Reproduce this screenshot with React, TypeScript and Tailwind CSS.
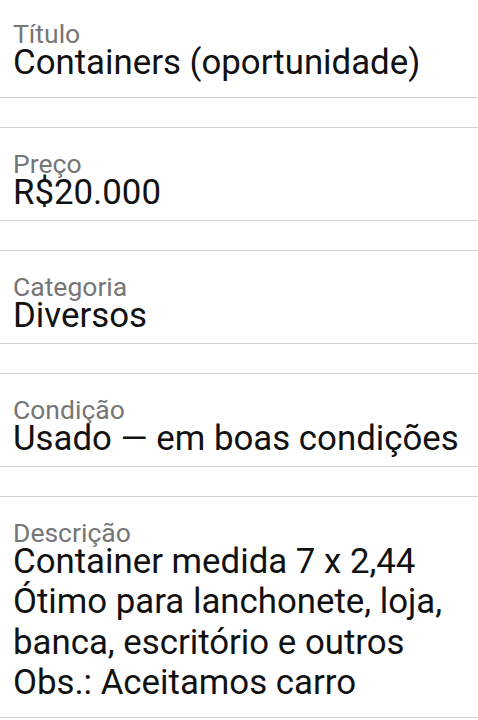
const fields = [
  { label: "Título", value: ["Containers (oportunidade)"] },
  { label: "Preço", value: ["R$20.000"] },
  { label: "Categoria", value: ["Diversos"] },
  { label: "Condição", value: ["Usado — em boas condições"] },
  {
    label: "Descrição",
    value: [
      "Container medida 7 x 2,44",
      "Ótimo para lanchonete, loja,",
      "banca, escritório e outros",
      "Obs.: Aceitamos carro",
    ],
  },
];

const Field = ({
  label,
  value,
  first,
  last,
}: {
  label: string;
  value: string[];
  first: boolean;
  last: boolean;
}) => {
  const padding = first
    ? "pt-[24.5px] pb-[15px]"
    : last
    ? "pt-[26.5px] pb-[14.5px] border-t border-[#d2d2d2]"
    : "pt-[26.5px] pb-[8px] border-t border-[#d2d2d2]";

  return (
    <div className={`px-[13px] border-b border-[#d2d2d2] ${padding}`}>
      <p className="text-[26.5px] leading-[17px] text-[#767676]">{label}</p>
      <div className="text-[34.8px] leading-[40.5px] text-[#111111]">
        {value.map((line) => (
          <p key={line} className="whitespace-nowrap">
            {line}
          </p>
        ))}
      </div>
    </div>
  );
};

export default function App() {
  return (
    <div
      className="w-[478px] h-[720px] overflow-hidden bg-white flex flex-col gap-[29px]"
      style={{ fontFamily: "Roboto, 'Noto Sans', sans-serif" }}
    >
      {fields.map((f, i) => (
        <Field
          key={f.label}
          label={f.label}
          value={f.value}
          first={i === 0}
          last={i === fields.length - 1}
        />
      ))}
    </div>
  );
}
